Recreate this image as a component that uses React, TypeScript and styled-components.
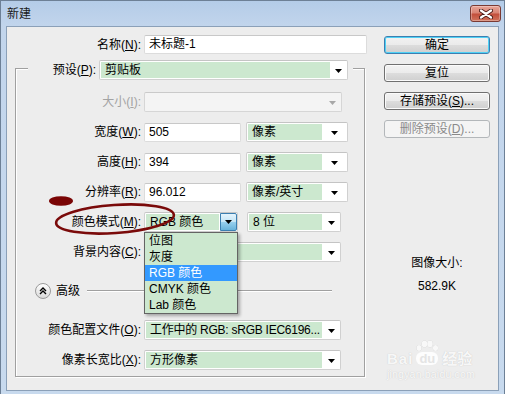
import styled, { createGlobalStyle } from "styled-components";

const GlobalStyle = createGlobalStyle`
  html, body {
    margin: 0;
    padding: 0;
    background: #c5d8ee;
  }
  body {
    font-family: "Liberation Sans", "Noto Sans CJK SC", sans-serif;
    font-size: 12px;
    color: #000;
  }
`;

const Arrow = ({ color = "#000" }: { color?: string }) => (
  <svg width="7" height="4" viewBox="0 0 7 4">
    <polygon points="0,0 7,0 3.5,4" fill={color} />
  </svg>
);

interface SelectProps {
  value: string;
  width: number;
  arrowWidth?: number;
  disabled?: boolean;
  open?: boolean;
  tight?: boolean;
  ml?: number;
}

const Select = ({ value, width, arrowWidth = 18, disabled, open, tight, ml = 0 }: SelectProps) => (
  <S.SelectBox $w={width} $ml={ml} $disabled={disabled}>
    <S.SelectValue $disabled={disabled} $tight={tight}>
      {value}
    </S.SelectValue>
    {open ? (
      <S.OpenArrow>
        <Arrow />
      </S.OpenArrow>
    ) : (
      <S.SelectArrow $w={arrowWidth}>
        <Arrow color={disabled ? "#a8a8a8" : "#000"} />
      </S.SelectArrow>
    )}
  </S.SelectBox>
);

const modes = ["位图", "灰度", "RGB 颜色", "CMYK 颜色", "Lab 颜色"];

const App = () => {
  return (
    <>
      <GlobalStyle />
      <S.Window>
        <S.TitleBar>
          <S.Title>新建</S.Title>
          <S.Close>
            <svg width="14" height="10" viewBox="0 0 14 10">
              <path d="M2 1.5 L12 8.5 M12 1.5 L2 8.5" stroke="#4a1a16" strokeWidth="4" strokeLinecap="round" />
              <path d="M2 1.5 L12 8.5 M12 1.5 L2 8.5" stroke="#fff" strokeWidth="2.2" strokeLinecap="round" />
            </svg>
          </S.Close>
        </S.TitleBar>

        <S.Body>
          <S.Main>
            <S.NameRow>
              <S.Label $w={134}>
                名称(<u>N</u>):
              </S.Label>
              <S.TextInput $w={223}>未标题-1</S.TextInput>
            </S.NameRow>

            <S.Group>
              <S.Legend>
                <S.Label $w={68}>
                  预设(<u>P</u>):
                </S.Label>
                <Select value="剪贴板" width={249} arrowWidth={17} />
              </S.Legend>

              <S.Row $first>
                <S.Label $w={125} $disabled>
                  大小(<u>I</u>):
                </S.Label>
                <Select value="" width={198} disabled />
              </S.Row>
              <S.Row>
                <S.Label $w={125}>
                  宽度(<u>W</u>):
                </S.Label>
                <S.TextInput $w={97}>505</S.TextInput>
                <Select value="像素" width={102} arrowWidth={25} ml={2} />
              </S.Row>
              <S.Row>
                <S.Label $w={125}>
                  高度(<u>H</u>):
                </S.Label>
                <S.TextInput $w={97}>394</S.TextInput>
                <Select value="像素" width={102} arrowWidth={25} ml={2} />
              </S.Row>
              <S.Row>
                <S.Label $w={125}>
                  分辨率(<u>R</u>):
                </S.Label>
                <S.TextInput $w={97}>96.012</S.TextInput>
                <Select value="像素/英寸" width={102} arrowWidth={25} ml={2} />
              </S.Row>
              <S.Row>
                <S.Label $w={125}>
                  颜色模式(<u>M</u>):
                </S.Label>
                <S.DropWrap>
                  <Select value="RGB 颜色" width={94} open />
                  <S.DropList>
                    {modes.map((m) => (
                      <S.DropItem key={m} $selected={m === "RGB 颜色"}>
                        {m}
                      </S.DropItem>
                    ))}
                  </S.DropList>
                </S.DropWrap>
                <Select value="8 位" width={94} ml={6} />
              </S.Row>
              <S.Row>
                <S.Label $w={125}>
                  背景内容(<u>C</u>):
                </S.Label>
                <Select value="" width={197} />
              </S.Row>

              <S.AdvancedRow>
                <svg width="16" height="16" viewBox="0 0 16 16">
                  <defs>
                    <linearGradient id="adv" x1="0" y1="0" x2="0" y2="1">
                      <stop offset="0" stopColor="#ffffff" />
                      <stop offset="1" stopColor="#d8d8d8" />
                    </linearGradient>
                  </defs>
                  <circle cx="8" cy="8" r="7.5" fill="url(#adv)" stroke="#9a9a9a" />
                  <path d="M5 8 L8 5 L11 8 M5 11 L8 8 L11 11" stroke="#000" strokeWidth="1.4" fill="none" />
                </svg>
                <S.AdvancedText>高级</S.AdvancedText>
                <S.Separator />
              </S.AdvancedRow>

              <S.Row $gapTop>
                <S.Label $w={125}>
                  颜色配置文件(<u>O</u>):
                </S.Label>
                <Select value="工作中的 RGB: sRGB IEC6196..." width={197} tight />
              </S.Row>
              <S.Row>
                <S.Label $w={125}>
                  像素长宽比(<u>X</u>):
                </S.Label>
                <Select value="方形像素" width={197} />
              </S.Row>
            </S.Group>
          </S.Main>

          <S.Side>
            <S.Button $default>确定</S.Button>
            <S.Button>复位</S.Button>
            <S.Button>
              存储预设(<u>S</u>)...
            </S.Button>
            <S.Button $disabled>
              删除预设(<u>D</u>)...
            </S.Button>
            <S.SizeInfo>
              <span>图像大小:</span>
              <S.SizeValue>582.9K</S.SizeValue>
            </S.SizeInfo>
          </S.Side>
        </S.Body>

        <S.Watermark>
          <S.WmLogo>
            <span>Bai</span>
            <S.WmPaw>
              <svg width="26" height="11" viewBox="0 0 26 11">
                <ellipse cx="5" cy="8" rx="2.6" ry="3" />
                <ellipse cx="10.5" cy="4" rx="2.8" ry="3.4" />
                <ellipse cx="16" cy="4" rx="2.8" ry="3.4" />
                <ellipse cx="21.5" cy="8" rx="2.6" ry="3" />
              </svg>
              <S.WmDu>du</S.WmDu>
            </S.WmPaw>
            <S.WmCn>经验</S.WmCn>
          </S.WmLogo>
          <S.WmUrl>jingyan.baidu.com</S.WmUrl>
        </S.Watermark>

        <S.Annotation width="140" height="46" viewBox="0 0 140 46">
          <ellipse cx="16" cy="9" rx="12" ry="4.8" fill="#7a0505" />
          <ellipse
            cx="70"
            cy="27"
            rx="59"
            ry="14"
            fill="none"
            stroke="#7a0a0a"
            strokeWidth="2.6"
            transform="rotate(-4 70 27)"
          />
        </S.Annotation>
      </S.Window>
    </>
  );
};

export default App;

const S = {
  Window: styled.div`
    position: relative;
    width: 505px;
    height: 394px;
    box-sizing: border-box;
    display: flex;
    flex-direction: column;
    border: 1px solid #6d8096;
    border-bottom: none;
    padding: 0 5px 3px;
    background: linear-gradient(to bottom, #b4cce8 0, #c2d5ec 26px, #c8daee 100%);
    overflow: hidden;
  `,

  TitleBar: styled.div`
    height: 25px;
    flex-shrink: 0;
    display: flex;
    justify-content: space-between;
    align-items: flex-start;
  `,

  Title: styled.div`
    padding: 5px 0 0 1px;
    line-height: 16px;
    color: #1a1a1a;
  `,

  Close: styled.div`
    margin: 4px -2px 0 0;
    width: 31px;
    height: 17px;
    box-sizing: border-box;
    border: 1px solid #7a3a33;
    border-radius: 3px;
    background: linear-gradient(to bottom, #e8a598 0%, #d98474 45%, #c34f3c 55%, #d0735c 100%);
    box-shadow: inset 0 0 0 1px rgba(255, 255, 255, 0.3);
    display: flex;
    align-items: center;
    justify-content: center;
  `,

  Body: styled.div`
    flex: 1;
    display: flex;
    background: #ededed;
    border: 1px solid #8ba0b8;
  `,

  Main: styled.div`
    width: 370px;
    padding-top: 8px;
    display: flex;
    flex-direction: column;
  `,

  NameRow: styled.div`
    display: flex;
    align-items: center;
    gap: 3px;
    height: 19px;
  `,

  Label: styled.div<{ $w: number; $disabled?: boolean }>`
    width: ${(p) => p.$w}px;
    flex-shrink: 0;
    text-align: right;
    white-space: nowrap;
    line-height: 16px;
    color: ${(p) => (p.$disabled ? "#a3a3a3" : "#000")};
  `,

  TextInput: styled.div<{ $w: number }>`
    width: ${(p) => p.$w}px;
    height: 19px;
    box-sizing: border-box;
    border: 1px solid #dcdcdc;
    border-top-color: #c8c8c8;
    border-radius: 2px;
    background: #fff;
    padding-left: 4px;
    line-height: 17px;
    white-space: nowrap;
  `,

  Group: styled.div`
    margin: 14px 0 0 8px;
    width: 350px;
    box-sizing: border-box;
    border: 1px solid #a0a0a0;
    box-shadow: inset 1px 1px 0 #fff, 1px 1px 0 #fff;
    display: flex;
    flex-direction: column;
    padding-bottom: 1px;
  `,

  Legend: styled.div`
    align-self: flex-start;
    display: flex;
    align-items: center;
    gap: 3px;
    height: 20px;
    margin: -9px 0 0 12px;
    padding-right: 5px;
    background: #ededed;
  `,

  Row: styled.div<{ $first?: boolean; $gapTop?: boolean }>`
    height: 30px;
    display: flex;
    align-items: center;
    gap: 3px;
    margin-top: ${(p) => (p.$first ? 7 : p.$gapTop ? 9 : 0)}px;
  `,

  SelectBox: styled.div<{ $w: number; $ml: number; $disabled?: boolean }>`
    width: ${(p) => p.$w}px;
    margin-left: ${(p) => p.$ml}px;
    height: 20px;
    flex-shrink: 0;
    box-sizing: border-box;
    display: flex;
    border: 1px solid ${(p) => (p.$disabled ? "#d6d6d6" : "#d0d0d0")};
    border-top-color: ${(p) => (p.$disabled ? "#cacaca" : "#c4c4c4")};
    border-radius: 2px;
    background: ${(p) => (p.$disabled ? "#f4f4f4" : "#fff")};
    padding: 1px 0 1px 1px;
  `,

  SelectValue: styled.div<{ $disabled?: boolean; $tight?: boolean }>`
    flex: 1;
    min-width: 0;
    background: ${(p) => (p.$disabled ? "transparent" : "#cce8cf")};
    padding-left: 4px;
    line-height: 16px;
    white-space: nowrap;
    overflow: hidden;
    letter-spacing: ${(p) => (p.$tight ? "-0.25px" : "normal")};
  `,

  SelectArrow: styled.div<{ $w: number }>`
    width: ${(p) => p.$w}px;
    flex-shrink: 0;
    display: flex;
    align-items: center;
    justify-content: center;
    padding-top: 1px;
  `,

  OpenArrow: styled.div`
    width: 17px;
    margin: -1px 0 -1px 1px;
    flex-shrink: 0;
    box-sizing: border-box;
    border: 1px solid #3c7fb1;
    border-radius: 0 2px 2px 0;
    background: linear-gradient(to bottom, #e5f4fc 0%, #c4e5f6 50%, #98d1ef 50%, #68b3db 100%);
    display: flex;
    align-items: center;
    justify-content: center;
  `,

  DropWrap: styled.div`
    position: relative;
    display: flex;
  `,

  DropList: styled.div`
    position: absolute;
    top: 20px;
    left: 0;
    width: 94px;
    box-sizing: border-box;
    border: 1px solid #646464;
    background: #cce8cf;
    box-shadow: 2px 2px 3px rgba(0, 0, 0, 0.3);
    z-index: 2;
  `,

  DropItem: styled.div<{ $selected?: boolean }>`
    height: 16px;
    line-height: 16px;
    padding-left: 4px;
    white-space: nowrap;
    background: ${(p) => (p.$selected ? "#3399ff" : "transparent")};
    color: ${(p) => (p.$selected ? "#fff" : "#000")};
  `,

  AdvancedRow: styled.div`
    height: 30px;
    margin-top: 9px;
    padding-left: 19px;
    display: flex;
    align-items: center;
  `,

  AdvancedText: styled.span`
    margin-left: 5px;
    line-height: 16px;
  `,

  Separator: styled.div`
    margin: -2px 0 0 7px;
    width: 245px;
    height: 1px;
    background: #a0a0a0;
    box-shadow: 0 1px 0 #fff;
  `,

  Side: styled.div`
    width: 106px;
    margin-left: 7px;
    padding-top: 9px;
    display: flex;
    flex-direction: column;
    gap: 10px;
  `,

  Button: styled.div<{ $default?: boolean; $disabled?: boolean }>`
    height: 18px;
    box-sizing: border-box;
    border: 1px solid ${(p) => (p.$default ? "#3c7fb1" : p.$disabled ? "#b3b7ba" : "#707070")};
    border-radius: 3px;
    background: ${(p) =>
      p.$disabled
        ? "#f4f4f4"
        : "linear-gradient(to bottom, #f2f2f2 0%, #ebebeb 50%, #dddddd 50%, #cfcfcf 100%)"};
    box-shadow: ${(p) =>
      p.$default ? "inset 0 0 0 1px #4fd1f5" : p.$disabled ? "none" : "inset 0 0 0 1px #fbfbfb"};
    color: ${(p) => (p.$disabled ? "#8a8a8a" : "#000")};
    display: flex;
    align-items: center;
    justify-content: center;
    line-height: 14px;
    white-space: nowrap;
  `,

  SizeInfo: styled.div`
    margin-top: 107px;
    display: flex;
    flex-direction: column;
    align-items: center;
    line-height: 16px;
  `,

  SizeValue: styled.span`
    margin-top: 7px;
  `,

  Watermark: styled.div`
    position: absolute;
    left: 386px;
    top: 339px;
    display: flex;
    flex-direction: column;
    color: rgba(255, 255, 255, 0.9);
    text-shadow: 0 0 1px rgba(110, 110, 110, 0.35);
    pointer-events: none;
  `,

  WmLogo: styled.div`
    display: flex;
    align-items: flex-end;
    font-size: 15px;
    font-weight: bold;
    line-height: 13px;
    letter-spacing: 1px;
  `,

  WmPaw: styled.div`
    display: flex;
    flex-direction: column;
    align-items: center;
    margin-left: 1px;

    svg {
      fill: rgba(255, 255, 255, 0.9);
      filter: drop-shadow(0 0 0.6px rgba(110, 110, 110, 0.45));
    }
  `,

  WmDu: styled.span`
    margin-top: 1px;
    padding: 0 3px;
    border-radius: 6px;
    background: rgba(255, 255, 255, 0.85);
    color: #e4e4e4;
    text-shadow: none;
    font-size: 13px;
    letter-spacing: 0;
  `,

  WmCn: styled.span`
    margin-left: 2px;
    font-size: 15px;
    letter-spacing: 0;
  `,

  WmUrl: styled.div`
    margin-top: 3px;
    font-size: 10.5px;
    line-height: 12px;
    letter-spacing: 0.2px;
  `,

  Annotation: styled.svg`
    position: absolute;
    left: 44px;
    top: 191px;
    z-index: 3;
    pointer-events: none;
  `,
};
